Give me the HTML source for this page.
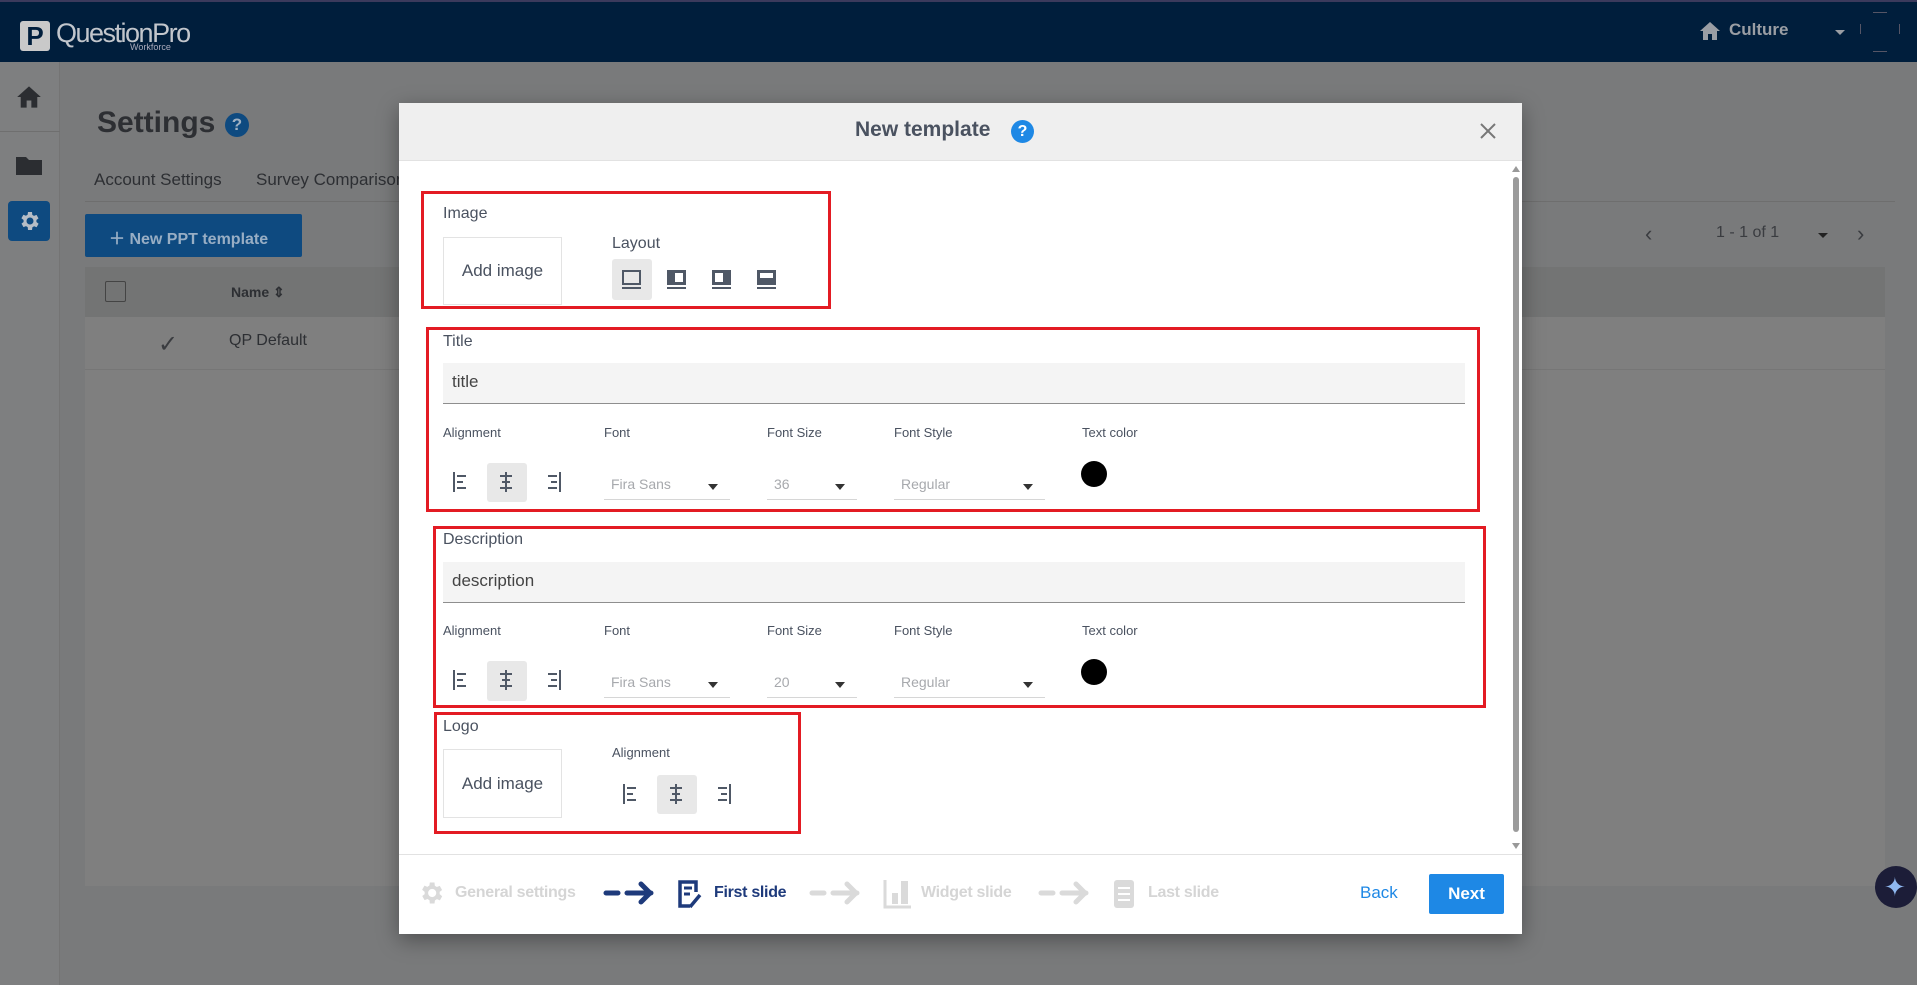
<!DOCTYPE html>
<html><head><meta charset="utf-8"><style>
*{box-sizing:border-box;margin:0;padding:0}
body{width:1917px;height:985px;position:relative;overflow:hidden;background:#797a7b;font-family:"Liberation Sans",sans-serif;}
.a{position:absolute;white-space:nowrap}
.red{position:absolute;border:3px solid #e31b23}
.lbl{position:absolute;font-size:13px;color:#4a5260;white-space:nowrap}
.hl{position:absolute;background:#e8e8e8;border-radius:3px}
.dd{position:absolute;border-bottom:1px solid #d6d6d6;height:30px;font-size:14px;color:#a7a9ad;padding:6px 0 0 7px}
.dd i{position:absolute;right:12px;top:14px;border-left:5px solid transparent;border-right:5px solid transparent;border-top:6px solid #333}
.inp{position:absolute;background:#f4f4f4;border-bottom:1px solid #8e8e8e;font-size:17px;color:#444;padding:9px 0 0 9px}
.box{position:absolute;border:1px solid #e3e3e3;font-size:17px;color:#4a5260;display:flex;align-items:center;justify-content:center}
.circ{position:absolute;width:26px;height:26px;border-radius:50%;background:#000}
.ft{position:absolute;top:884px;font-size:16px;font-weight:bold;letter-spacing:-0.3px;white-space:nowrap}
</style></head><body>
<!-- header -->
<div class="a" style="left:0;top:0;width:1917px;height:2px;background:#3b3a5c"></div>
<div class="a" style="left:0;top:2px;width:1917px;height:60px;background:#001e3c"></div>
<div class="a" style="left:20px;top:21px;width:30px;height:30px;background:#c9c9c9;border-radius:3px;color:#001e3c;font-weight:bold;font-size:26px;text-align:center;line-height:30px">P</div>
<div class="a" style="left:56px;top:18px;font-size:27px;color:#c2c6cc;letter-spacing:-1.5px">QuestionPro</div>
<div class="a" style="left:130px;top:42px;font-size:9px;color:#aab">Workforce</div>
<svg class="a" style="left:1699px;top:21px" width="22" height="20" viewBox="0 0 22 20"><path d="M11 1L1 10h3v9h5v-6h4v6h5v-9h3z" fill="#9a9ea4"/></svg>
<div class="a" style="left:1729px;top:20px;font-size:17px;font-weight:bold;color:#9a9ea4">Culture</div>
<div class="a" style="left:1835px;top:30px;border-left:5px solid transparent;border-right:5px solid transparent;border-top:5px solid #9a9ea4"></div>
<div class="a" style="left:1860px;top:24px;width:1px;height:10px;background:#556"></div>
<div class="a" style="left:1899px;top:24px;width:1px;height:10px;background:#556"></div>
<div class="a" style="left:1873px;top:12px;width:14px;height:1px;background:#556"></div>
<div class="a" style="left:1873px;top:51px;width:14px;height:1px;background:#556"></div>
<!-- sidebar -->
<div class="a" style="left:0;top:62px;width:60px;height:923px;background:#7e7f80;border-right:1px solid #747474"></div>
<svg class="a" style="left:16px;top:85px" width="26" height="24" viewBox="0 0 22 20"><path d="M11 1L1 10h3v9h5v-6h4v6h5v-9h3z" fill="#2b2d31"/></svg>
<div class="a" style="left:0;top:131px;width:60px;height:1px;background:#6f6f6f"></div>
<svg class="a" style="left:16px;top:155px" width="26" height="20" viewBox="0 0 26 20"><path d="M0 2h10l3 3h13v15H0z" fill="#2b2d31"/></svg>
<div class="a" style="left:8px;top:201px;width:42px;height:40px;background:#0e4a80;border-radius:4px"></div>
<svg class="a" style="left:17px;top:209px" width="24" height="24" viewBox="0 0 24 24"><path fill="#b6bdc6" d="M19.4 13a7.5 7.5 0 000-2l2.1-1.6-2-3.5-2.5 1a7 7 0 00-1.7-1L15 3h-4l-.4 2.7a7 7 0 00-1.7 1l-2.5-1-2 3.5L6.6 11a7.5 7.5 0 000 2l-2.1 1.6 2 3.5 2.5-1a7 7 0 001.7 1L11 21h4l.4-2.7a7 7 0 001.7-1l2.5 1 2-3.5zM13 15.5a3.5 3.5 0 110-7 3.5 3.5 0 010 7z"/></svg>
<!-- page -->
<div class="a" style="left:97px;top:106px;font-size:30px;font-weight:bold;color:#2d2f33">Settings</div>
<div class="a" style="left:225px;top:113px;width:24px;height:24px;border-radius:50%;background:#0e4a80;color:#9fb0c2;font-weight:bold;font-size:17px;text-align:center;line-height:24px">?</div>
<div class="a" style="left:94px;top:170px;font-size:17px;color:#2d2f33">Account Settings</div>
<div class="a" style="left:256px;top:170px;font-size:17px;color:#2d2f33">Survey Comparison</div>
<div class="a" style="left:85px;top:201px;width:1810px;height:1px;background:#6e6e6e"></div>
<div class="a" style="left:85px;top:214px;width:217px;height:43px;background:#0e4a80;border-radius:2px;color:#98aec4;font-size:16px;font-weight:bold;padding:11px 0 0 24px">＋ New PPT template</div>
<div class="a" style="left:85px;top:267px;width:1800px;height:50px;background:#737474"></div>
<div class="a" style="left:105px;top:281px;width:21px;height:21px;border:1px solid #444;border-radius:2px"></div>
<div class="a" style="left:231px;top:284px;font-size:14px;font-weight:bold;color:#2d2f33">Name ⇕</div>
<div class="a" style="left:85px;top:317px;width:1800px;height:569px;background:#7f7f7f"></div>
<div class="a" style="left:85px;top:369px;width:1800px;height:1px;background:#767676"></div>
<div class="a" style="left:158px;top:330px;font-size:24px;color:#3a3c40">✓</div>
<div class="a" style="left:229px;top:332px;font-size:16px;color:#2d2f33">QP Default</div>
<div class="a" style="left:1645px;top:221px;font-size:22px;color:#3a3c40">‹</div>
<div class="a" style="left:1716px;top:224px;font-size:16px;color:#3a3c40">1 - 1 of 1</div>
<div class="a" style="left:1818px;top:233px;border-left:5px solid transparent;border-right:5px solid transparent;border-top:5px solid #222"></div>
<div class="a" style="left:1857px;top:221px;font-size:22px;color:#3a3c40">›</div>
<div class="a" style="left:1875px;top:866px;width:42px;height:42px;border-radius:50%;background:#1c1d38"></div>
<div class="a" style="left:1884px;top:872px;font-size:26px;color:#8fb8f0">✦</div>
<!-- modal -->
<div class="a" style="left:399px;top:103px;width:1123px;height:831px;background:#fff;box-shadow:0 6px 20px rgba(0,0,0,.35)"></div>
<div class="a" style="left:399px;top:103px;width:1123px;height:58px;background:#efefef;border-bottom:1px solid #e2e2e2"></div>
<div class="a" style="left:855px;top:118px;font-size:21px;font-weight:bold;color:#4a5260">New template</div>
<div class="a" style="left:1011px;top:120px;width:23px;height:23px;border-radius:50%;background:#1e88e5;color:#fff;font-weight:bold;font-size:16px;text-align:center;line-height:23px">?</div>
<svg class="a" style="left:1479px;top:122px" width="18" height="18" viewBox="0 0 18 18"><path d="M2 2L16 16M16 2L2 16" stroke="#777" stroke-width="2"/></svg>
<div class="a" style="left:1512px;top:166px;border-left:4px solid transparent;border-right:4px solid transparent;border-bottom:6px solid #999"></div>
<div class="a" style="left:1513px;top:177px;width:6px;height:655px;background:#9b9b9b;border-radius:3px"></div>
<div class="a" style="left:1512px;top:843px;border-left:4px solid transparent;border-right:4px solid transparent;border-top:6px solid #999"></div>

<!-- image section -->
<div class="red" style="left:421px;top:191px;width:410px;height:118px"></div>
<div class="a" style="left:443px;top:205px;font-size:16px;color:#4a5260">Image</div>
<div class="box" style="left:443px;top:237px;width:119px;height:68px">Add image</div>
<div class="a" style="left:612px;top:235px;font-size:16px;color:#4a5260">Layout</div>
<div class="hl" style="left:612px;top:259px;width:40px;height:41px"></div>
<svg class="a" style="left:621px;top:268px" width="160" height="24" viewBox="0 0 160 24">
<g fill="none" stroke="#4f5866" stroke-width="2"><rect x="2" y="3" width="17" height="13"/></g><rect x="1" y="19" width="19" height="2" fill="#4f5866"/>
<g transform="translate(45 0)"><rect x="1" y="2" width="19" height="15" fill="#4f5866"/><rect x="9" y="5" width="8" height="9" fill="#fff"/><rect x="1" y="19" width="19" height="2" fill="#4f5866"/></g>
<g transform="translate(90 0)"><rect x="1" y="2" width="19" height="15" fill="#4f5866"/><rect x="4" y="5" width="8" height="9" fill="#fff"/><rect x="1" y="19" width="19" height="2" fill="#4f5866"/></g>
<g transform="translate(135 0)"><rect x="1" y="2" width="19" height="15" fill="#4f5866"/><rect x="4" y="5" width="13" height="5" fill="#fff"/><rect x="1" y="19" width="19" height="2" fill="#4f5866"/></g>
</svg>

<!-- title section -->
<div class="red" style="left:426px;top:327px;width:1054px;height:185px"></div>
<div class="a" style="left:443px;top:333px;font-size:16px;color:#4a5260">Title</div>
<div class="inp" style="left:443px;top:363px;width:1022px;height:41px">title</div>
<div class="lbl" style="left:443px;top:425px">Alignment</div>
<div class="lbl" style="left:604px;top:425px">Font</div>
<div class="lbl" style="left:767px;top:425px">Font Size</div>
<div class="lbl" style="left:894px;top:425px">Font Style</div>
<div class="lbl" style="left:1082px;top:425px">Text color</div>
<div class="hl" style="left:487px;top:463px;width:40px;height:39px"></div>
<svg class="a" style="left:452px;top:471px" width="112" height="22" viewBox="0 0 112 22"><g fill="#4f5866"><rect x="1" y="1" width="2" height="20"/><rect x="5" y="4" width="9" height="2"/><rect x="5" y="10" width="6" height="2"/><rect x="5" y="16" width="9" height="2"/>
<rect x="53" y="1" width="2" height="20"/><rect x="48" y="4" width="12" height="2"/><rect x="50" y="10" width="8" height="2"/><rect x="48" y="16" width="12" height="2"/>
<rect x="107" y="1" width="2" height="20"/><rect x="96" y="4" width="9" height="2"/><rect x="99" y="10" width="6" height="2"/><rect x="96" y="16" width="9" height="2"/></g></svg>
<div class="dd" style="left:604px;top:470px;width:126px">Fira Sans<i></i></div>
<div class="dd" style="left:767px;top:470px;width:90px">36<i></i></div>
<div class="dd" style="left:894px;top:470px;width:151px">Regular<i></i></div>
<div class="circ" style="left:1081px;top:461px"></div>

<!-- description section -->
<div class="red" style="left:433px;top:526px;width:1053px;height:182px"></div>
<div class="a" style="left:443px;top:531px;font-size:16px;color:#4a5260">Description</div>
<div class="inp" style="left:443px;top:562px;width:1022px;height:41px">description</div>
<div class="lbl" style="left:443px;top:623px">Alignment</div>
<div class="lbl" style="left:604px;top:623px">Font</div>
<div class="lbl" style="left:767px;top:623px">Font Size</div>
<div class="lbl" style="left:894px;top:623px">Font Style</div>
<div class="lbl" style="left:1082px;top:623px">Text color</div>
<div class="hl" style="left:487px;top:661px;width:40px;height:40px"></div>
<svg class="a" style="left:452px;top:669px" width="112" height="22" viewBox="0 0 112 22"><g fill="#4f5866"><rect x="1" y="1" width="2" height="20"/><rect x="5" y="4" width="9" height="2"/><rect x="5" y="10" width="6" height="2"/><rect x="5" y="16" width="9" height="2"/>
<rect x="53" y="1" width="2" height="20"/><rect x="48" y="4" width="12" height="2"/><rect x="50" y="10" width="8" height="2"/><rect x="48" y="16" width="12" height="2"/>
<rect x="107" y="1" width="2" height="20"/><rect x="96" y="4" width="9" height="2"/><rect x="99" y="10" width="6" height="2"/><rect x="96" y="16" width="9" height="2"/></g></svg>
<div class="dd" style="left:604px;top:668px;width:126px">Fira Sans<i></i></div>
<div class="dd" style="left:767px;top:668px;width:90px">20<i></i></div>
<div class="dd" style="left:894px;top:668px;width:151px">Regular<i></i></div>
<div class="circ" style="left:1081px;top:659px"></div>

<!-- logo section -->
<div class="red" style="left:434px;top:712px;width:367px;height:122px"></div>
<div class="a" style="left:443px;top:718px;font-size:16px;color:#4a5260">Logo</div>
<div class="box" style="left:443px;top:749px;width:119px;height:69px">Add image</div>
<div class="lbl" style="left:612px;top:745px">Alignment</div>
<div class="hl" style="left:657px;top:775px;width:40px;height:39px"></div>
<svg class="a" style="left:622px;top:783px" width="112" height="22" viewBox="0 0 112 22"><g fill="#4f5866"><rect x="1" y="1" width="2" height="20"/><rect x="5" y="4" width="9" height="2"/><rect x="5" y="10" width="6" height="2"/><rect x="5" y="16" width="9" height="2"/>
<rect x="53" y="1" width="2" height="20"/><rect x="48" y="4" width="12" height="2"/><rect x="50" y="10" width="8" height="2"/><rect x="48" y="16" width="12" height="2"/>
<rect x="107" y="1" width="2" height="20"/><rect x="96" y="4" width="9" height="2"/><rect x="99" y="10" width="6" height="2"/><rect x="96" y="16" width="9" height="2"/></g></svg>

<!-- footer -->
<div class="a" style="left:399px;top:854px;width:1123px;height:1px;background:#e2e2e2"></div>
<svg class="a" style="left:417px;top:879px" width="28" height="28" viewBox="0 0 24 24"><path fill="#dadada" d="M19.4 13a7.5 7.5 0 000-2l2.1-1.6-2-3.5-2.5 1a7 7 0 00-1.7-1L15 3h-4l-.4 2.7a7 7 0 00-1.7 1l-2.5-1-2 3.5L6.6 11a7.5 7.5 0 000 2l-2.1 1.6 2 3.5 2.5-1a7 7 0 001.7 1L11 21h4l.4-2.7a7 7 0 001.7-1l2.5 1 2-3.5zM13 15.5a3.5 3.5 0 110-7 3.5 3.5 0 010 7z"/></svg>
<div class="ft" style="left:455px;color:#d5d5d5">General settings</div>
<svg class="a" style="left:603px;top:881px" width="54" height="24" viewBox="0 0 54 24"><path d="M3 12h12M24 12h24M38 3l9 9-9 9" stroke="#1e3a7b" stroke-width="5" stroke-linecap="round" fill="none"/></svg>
<svg class="a" style="left:676px;top:879px" width="28" height="30" viewBox="0 0 28 30"><path d="M14 27H4V3h16v10" stroke="#1e3a7b" stroke-width="3.5" fill="none"/><path d="M8 9h8M8 15h6" stroke="#1e3a7b" stroke-width="3"/><path d="M14 28l10-12" stroke="#1e3a7b" stroke-width="3.5"/></svg>
<div class="ft" style="left:714px;color:#1e3a7b">First slide</div>
<svg class="a" style="left:809px;top:881px" width="54" height="24" viewBox="0 0 54 24"><path d="M3 12h12M24 12h24M38 3l9 9-9 9" stroke="#dadada" stroke-width="5" stroke-linecap="round" fill="none"/></svg>
<svg class="a" style="left:883px;top:879px" width="30" height="30" viewBox="0 0 30 30"><path d="M2 1v27h26" stroke="#dadada" stroke-width="3" fill="none"/><rect x="9" y="14" width="6" height="11" fill="#dadada"/><rect x="18" y="2" width="7" height="23" fill="#dadada"/></svg>
<div class="ft" style="left:921px;color:#d5d5d5">Widget slide</div>
<svg class="a" style="left:1038px;top:881px" width="54" height="24" viewBox="0 0 54 24"><path d="M3 12h12M24 12h24M38 3l9 9-9 9" stroke="#dadada" stroke-width="5" stroke-linecap="round" fill="none"/></svg>
<svg class="a" style="left:1113px;top:879px" width="22" height="30" viewBox="0 0 22 30"><rect x="1" y="1" width="20" height="28" rx="3" fill="#dadada"/><path d="M5 9h12M5 15h12M5 21h12" stroke="#fff" stroke-width="2"/></svg>
<div class="ft" style="left:1148px;color:#d5d5d5">Last slide</div>
<div class="a" style="left:1360px;top:883px;font-size:17px;color:#1e88e5">Back</div>
<div class="a" style="left:1429px;top:874px;width:75px;height:40px;background:#1e88e5;border-radius:2px;color:#fff;font-size:17px;font-weight:bold;text-align:center;line-height:40px">Next</div>
</body></html>
